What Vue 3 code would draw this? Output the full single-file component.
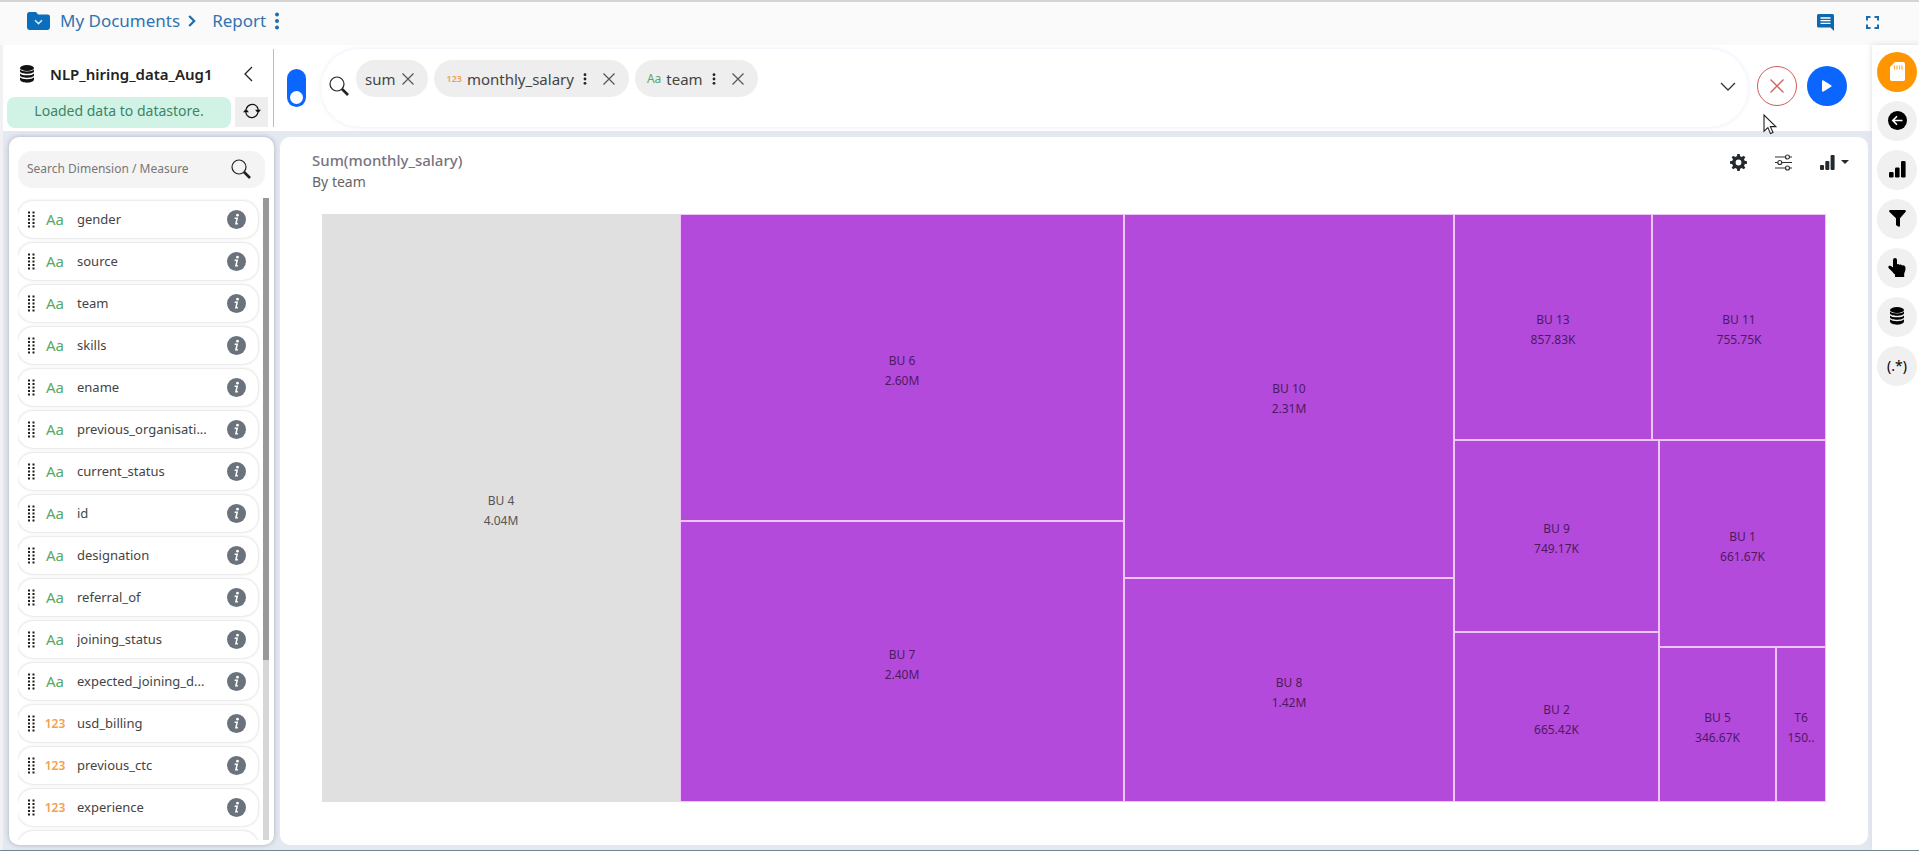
<template>
  <div class="app">
    <header class="topbar">
      <nav class="crumbs" aria-label="Breadcrumb">
        <svg class="folder" width="23" height="18" viewBox="0 0 23 18">
          <path d="M2.5 0h6.5l2.2 2.4h9.3A2.4 2.4 0 0 1 23 4.8v10.8a2.4 2.4 0 0 1-2.4 2.4H2.4A2.4 2.4 0 0 1 0 15.600V2.400A2.4 2.4 0 0 1 2.500 0z" fill="#0a6ebd" />
          <path d="M8 8.200l3.500 3.400L15 8.200" fill="none" stroke="#d5ebfb" stroke-width="1.500" />
        </svg>
        <a href="#">My Documents</a>
        <svg class="crumb-sep" width="8" height="12" viewBox="0 0 8 12">
          <path d="M1.200 1l5 5-5 5" fill="none" stroke="#1b6cb0" stroke-width="2.200" />
        </svg>
        <a href="#">Report</a>
        <button class="plain" aria-label="Report menu">
          <svg width="6" height="18" viewBox="0 0 6 18" fill="#1b6cb0">
            <circle cx="3" cy="2.500" r="2" /><circle cx="3" cy="9" r="2" /><circle cx="3" cy="15.500" r="2" />
          </svg>
        </button>
      </nav>
      <div class="top-actions">
        <button class="plain" aria-label="Comments">
          <svg width="17" height="17" viewBox="0 0 17 17">
            <path d="M1.500 0h14A1.500 1.500 0 0 1 17 1.500V17l-3.500-3.500h-12A1.500 1.500 0 0 1 0 12V1.500A1.500 1.500 0 0 1 1.500 0z" fill="#0c69ae" />
            <path d="M3.500 4h10M3.500 6.700h10M3.500 9.400h10" stroke="#fff" stroke-width="1.300" />
          </svg>
        </button>
        <button class="plain" aria-label="Full screen">
          <svg width="13" height="13" viewBox="0 0 13 13" fill="none" stroke="#1b6cb0" stroke-width="2">
            <path d="M1 4.500V1h3.500M8.500 1H12v3.500M12 8.500V12H8.500M4.500 12H1V8.500" />
          </svg>
        </button>
      </div>
    </header>

    <div class="body">
      <div class="workspace">
        <div class="query-row">
          <section class="source">
            <div class="source-head">
              <svg width="14" height="18" viewBox="0 0 14 18">
                <g fill="#111">
                  <ellipse cx="7" cy="3" rx="7" ry="3" />
                  <path d="M0 4.600c1.500 2.600 12.500 2.600 14 0v2c-1 3-13 3-14 0z" />
                  <path d="M0 8.400c1.500 2.600 12.500 2.600 14 0v2c-1 3-13 3-14 0z" />
                  <path d="M0 12.200c1.500 2.600 12.500 2.600 14 0v2.400c-1 4.200-13 4.200-14 0z" />
                </g>
              </svg>
              <h1>NLP_hiring_data_Aug1</h1>
              <button class="plain" aria-label="Collapse panel">
                <svg width="9" height="16" viewBox="0 0 9 16" fill="none" stroke="#222" stroke-width="1.300">
                  <path d="M8 1L1 8l7 7" />
                </svg>
              </button>
            </div>
            <div class="source-status">
              <p role="status">Loaded data to datastore.</p>
              <button class="refresh" aria-label="Refresh">
                <svg width="18" height="16" viewBox="0 0 18 16">
                  <path d="M3.200 6.200a6.200 6.200 0 0 1 10.600-2.700M14.800 9.800a6.200 6.200 0 0 1-10.600 2.700" fill="none" stroke="#111" stroke-width="1.200" />
                  <path d="M13.800 3.500a6 6 0 0 1 1.400 3.500M4.200 12.500A6 6 0 0 1 2.800 9" fill="none" stroke="#111" stroke-width="1.200" />
                  <path d="M0 9.200L3 5.800l3 3.400zM12 6.800h6l-3 3.400z" fill="#111" />
                </svg>
              </button>
            </div>
          </section>

          <label class="switch">
            <input v-model="nlpMode" type="checkbox" aria-label="Search mode" />
            <span></span>
          </label>

          <div class="query">
            <svg class="lens" width="20" height="20" viewBox="0 0 20 20" fill="none" stroke="#222">
              <circle cx="8" cy="8" r="7" stroke-width="1.200" />
              <path d="M13 13l6 6" stroke-width="2.600" />
            </svg>
            <ul class="chips">
              <li v-for="chip in chips" :key="chip.label" class="chip">
                <span v-if="chip.type" :class="['chip-type', chip.type]">{{ typeLabel[chip.type] }}</span>
                <span>{{ chip.label }}</span>
                <button v-if="chip.type" class="plain chip-menu" :aria-label="chip.label + ' options'">
                  <svg width="4" height="12" viewBox="0 0 4 12" fill="#222">
                    <circle cx="2" cy="1.700" r="1.400" /><circle cx="2" cy="6" r="1.400" /><circle cx="2" cy="10.300" r="1.400" />
                  </svg>
                </button>
                <button class="plain" :aria-label="'Remove ' + chip.label">
                  <svg width="12" height="12" viewBox="0 0 12 12" stroke="#555" stroke-width="1.200">
                    <path d="M.5 .5l11 11M11.500 .5l-11 11" />
                  </svg>
                </button>
              </li>
            </ul>
            <button class="plain expand" aria-label="Expand query">
              <svg width="16" height="9" viewBox="0 0 16 9" fill="none" stroke="#333" stroke-width="1.300">
                <path d="M1 1l7 7 7-7" />
              </svg>
            </button>
          </div>

          <button class="round clear" aria-label="Clear">
            <svg width="14" height="14" viewBox="0 0 14 14" stroke="#d0605f" stroke-width="1.300">
              <path d="M.5 .5l13 13M13.500 .5l-13 13" />
            </svg>
          </button>
          <button class="round run" aria-label="Run">
            <svg width="10" height="12" viewBox="0 0 10 12" fill="#fff">
              <path d="M1.500 .6l7.600 4.600a1 1 0 0 1 0 1.600L1.500 11.400A1 1 0 0 1 0 10.600V1.400A1 1 0 0 1 1.500 .6z" />
            </svg>
          </button>
        </div>

        <div class="panels">
          <aside class="fields">
            <div class="field-search">
              <input type="text" placeholder="Search Dimension / Measure" aria-label="Search Dimension / Measure" />
              <svg width="20" height="20" viewBox="0 0 20 20" fill="none" stroke="#222">
                <circle cx="8" cy="8" r="7" stroke-width="1.200" />
                <path d="M13 13l6 6" stroke-width="2.600" />
              </svg>
            </div>
            <div class="field-scroll">
              <ul class="field-list">
                <li v-for="field in fields" :key="field.name" class="field">
                  <svg class="grip" width="7" height="17" viewBox="0 0 7 17" fill="#1c1c1c">
                    <template v-for="row in 5" :key="row">
                      <rect x="0" :y="row * 3.500 - 3" width="2" height="2" />
                      <rect x="4.500" :y="row * 3.500 - 3" width="2" height="2" />
                    </template>
                  </svg>
                  <span :class="['field-type', field.type]">{{ typeLabel[field.type] }}</span>
                  <span class="field-name">{{ field.name }}</span>
                  <button class="plain" :aria-label="'About ' + field.name">
                    <svg width="19" height="19" viewBox="0 0 19 19">
                      <circle cx="9.500" cy="9.500" r="9.500" fill="#6a737c" />
                      <circle cx="10.500" cy="5.200" r="1.400" fill="#fff" />
                      <path d="M7.600 8.200h2.600l-1.300 5.600h2" fill="none" stroke="#fff" stroke-width="1.500" />
                    </svg>
                  </button>
                </li>
              </ul>
              <div class="track"><div class="thumb"></div></div>
            </div>
          </aside>

          <main class="report">
            <div class="report-head">
              <div>
                <h2>Sum(monthly_salary)</h2>
                <p>By team</p>
              </div>
              <div class="report-tools">
                <button class="plain" aria-label="Settings">
                  <svg width="17" height="17" viewBox="0 0 17 17">
                    <circle cx="8.500" cy="8.500" r="4.700" fill="none" stroke="#222a30" stroke-width="3.600" />
                    <path
                      v-for="i in 8"
                      :key="i"
                      d="M6.800 3L7.300 0h2.400l.5 3z"
                      fill="#222a30"
                      :transform="`rotate(${i * 45} 8.500 8.500)`"
                    />
                  </svg>
                </button>
                <button class="plain" aria-label="Adjust">
                  <svg width="17" height="17" viewBox="0 0 17 17" fill="#fff" stroke="#333" stroke-width="1.200">
                    <path d="M0 3h17M0 8.500h17M0 14h17" />
                    <circle cx="12.500" cy="3" r="2" /><circle cx="4.800" cy="8.500" r="2" /><circle cx="12.500" cy="14" r="2" />
                  </svg>
                </button>
                <button class="plain chart-type" aria-label="Chart type">
                  <svg width="15" height="15" viewBox="0 0 15 15" fill="#222a30">
                    <rect x="0" y="10" width="4" height="5" rx="1" />
                    <rect x="5.300" y="6" width="4" height="9" rx="1" />
                    <rect x="10.600" y="0" width="4" height="15" rx="1" />
                  </svg>
                  <svg width="8" height="4" viewBox="0 0 8 4" fill="#222a30"><path d="M0 0h8L4 4z" /></svg>
                </button>
              </div>
            </div>

            <div class="treemap">
              <div
                v-for="cell in cells"
                :key="cell.name"
                :class="['cell', { muted: cell.muted }]"
                :style="{ gridArea: cell.area }"
              >
                <span>{{ cell.name }}</span>
                <span>{{ cell.value }}</span>
              </div>
            </div>
          </main>
        </div>
      </div>

      <aside class="rail">
        <button class="round rail-btn save" aria-label="Storage">
          <svg width="15" height="19" viewBox="0 0 15 19">
            <path d="M5 0h8.200A1.800 1.800 0 0 1 15 1.800v15.400a1.800 1.800 0 0 1-1.800 1.800H1.800A1.800 1.800 0 0 1 0 17.200V5z" fill="#fff" />
            <path d="M4.500 3.500v4M7 3.500v4M9.500 3.500v4M12 3.500v4" stroke="#ffad3b" stroke-width="1.200" />
          </svg>
        </button>
        <button class="round rail-btn" aria-label="Back">
          <svg width="19" height="19" viewBox="0 0 19 19">
            <circle cx="9.500" cy="9.500" r="9.500" fill="#000" />
            <path d="M14.500 9.500H5M9 5.300L4.800 9.500 9 13.700" fill="none" stroke="#fff" stroke-width="1.600" />
          </svg>
        </button>
        <button class="round rail-btn" aria-label="Charts">
          <svg width="17" height="17" viewBox="0 0 17 17">
            <rect x="0" y="11" width="4.600" height="5.500" rx="1.200" />
            <rect x="6" y="6.500" width="4.600" height="10" rx="1.200" />
            <rect x="12" y="0" width="4.600" height="16.500" rx="1.200" />
          </svg>
        </button>
        <button class="round rail-btn" aria-label="Filters">
          <svg width="17" height="17" viewBox="0 0 17 17">
            <path d="M1.300 0h14.400c1 0 1.500 1.200.8 2L11 8.200v7.300c0 1-.9 1.600-1.700 1.100l-1.800-1.100a1.200 1.200 0 0 1-.5-1V8.200L.5 2C-.2 1.200.3 0 1.300 0z" />
          </svg>
        </button>
        <button class="round rail-btn" aria-label="Interactions">
          <svg width="18" height="19" viewBox="0 0 18 19">
            <path d="M5 2a2 2 0 0 1 4 0v4.500c1-.7 2-.4 2.500.4 1-.6 2-.3 2.500.6 1.800-.5 3.500.3 3.500 2.500 0 3-.8 4-1.300 5.500V19H7v-2.500c-1.500-1.200-3.500-4-5.800-5.800C-1 9 1 6.800 3 8l2 1.500z" />
          </svg>
        </button>
        <button class="round rail-btn" aria-label="Data">
          <svg width="14" height="18" viewBox="0 0 14 18">
            <ellipse cx="7" cy="3" rx="7" ry="3" />
            <path d="M0 4.600c1.500 2.600 12.500 2.600 14 0v2c-1 3-13 3-14 0z" />
            <path d="M0 8.400c1.500 2.600 12.500 2.600 14 0v2c-1 3-13 3-14 0z" />
            <path d="M0 12.200c1.500 2.600 12.500 2.600 14 0v2.400c-1 4.200-13 4.200-14 0z" />
          </svg>
        </button>
        <button class="round rail-btn regex">(.*)</button>
      </aside>
    </div>

    <svg class="pointer" width="14" height="21" viewBox="0 0 14 21">
      <path d="M1 1v16.200l3.900-3.600 2.600 6 2.500-1.100-2.600-5.900h5.400z" fill="#fff" stroke="#222" stroke-width="1.100" />
    </svg>
  </div>
</template>

<script setup>
import { ref } from 'vue'

const nlpMode = ref(true)

const typeLabel = { text: 'Aa', num: '123' }

const chips = [
  { label: 'sum' },
  { label: 'monthly_salary', type: 'num' },
  { label: 'team', type: 'text' },
]

const fields = [
  { name: 'gender', type: 'text' },
  { name: 'source', type: 'text' },
  { name: 'team', type: 'text' },
  { name: 'skills', type: 'text' },
  { name: 'ename', type: 'text' },
  { name: 'previous_organisati...', type: 'text' },
  { name: 'current_status', type: 'text' },
  { name: 'id', type: 'text' },
  { name: 'designation', type: 'text' },
  { name: 'referral_of', type: 'text' },
  { name: 'joining_status', type: 'text' },
  { name: 'expected_joining_d...', type: 'text' },
  { name: 'usd_billing', type: 'num' },
  { name: 'previous_ctc', type: 'num' },
  { name: 'experience', type: 'num' },
  { name: '' },
]

// area: row start / column start / row end / column end
const cells = [
  { name: 'BU 4', value: '4.04M', area: '1 / 1 / 7 / 2', muted: true },
  { name: 'BU 6', value: '2.60M', area: '1 / 2 / 3 / 3' },
  { name: 'BU 7', value: '2.40M', area: '3 / 2 / 7 / 3' },
  { name: 'BU 10', value: '2.31M', area: '1 / 3 / 4 / 4' },
  { name: 'BU 8', value: '1.42M', area: '4 / 3 / 7 / 4' },
  { name: 'BU 13', value: '857.83K', area: '1 / 4 / 2 / 5' },
  { name: 'BU 11', value: '755.75K', area: '1 / 5 / 2 / 8' },
  { name: 'BU 9', value: '749.17K', area: '2 / 4 / 5 / 6' },
  { name: 'BU 2', value: '665.42K', area: '5 / 4 / 7 / 6' },
  { name: 'BU 1', value: '661.67K', area: '2 / 6 / 6 / 8' },
  { name: 'BU 5', value: '346.67K', area: '6 / 6 / 7 / 7' },
  { name: 'T6', value: '150..', area: '6 / 7 / 7 / 8' },
]
</script>

<style>
body {
  margin: 0;
  background: #fff;
}
</style>

<style scoped>
.app {
  display: flex;
  flex-direction: column;
  height: 100vh;
  box-sizing: border-box;
  border-bottom: 1px solid #70868b;
  overflow: hidden;
  font-family: "Noto Sans", "Open Sans", sans-serif;
  font-size: 14px;
  color: #444;
}
.app * { box-sizing: border-box; }
h1, h2, p, ul { margin: 0; padding: 0; }
ul { list-style: none; }
svg { display: block; flex: none; }
button { font-family: inherit; cursor: pointer; }
.plain {
  display: flex;
  align-items: center;
  padding: 0;
  border: none;
  background: none;
}
.round {
  display: flex;
  align-items: center;
  justify-content: center;
  flex: none;
  width: 40px;
  height: 40px;
  padding: 0;
  border: none;
  border-radius: 50%;
}

/* ── Top bar ── */
.topbar {
  display: flex;
  align-items: center;
  justify-content: space-between;
  flex: none;
  height: 45px;
  padding: 0 40px 6px 27px;
  border-top: 2px solid #d4d4d4;
  background: #fafafa;
}
.crumbs { display: flex; align-items: center; }
.crumbs a {
  color: #3173b3;
  font-size: 17px;
  line-height: 24px;
  text-decoration: none;
}
.folder { margin-right: 10px; }
.crumb-sep { margin: 0 16px 0 8px; }
.crumbs .plain { margin-left: 8px; }
.top-actions {
  display: flex;
  align-items: center;
  gap: 32px;
  padding-top: 4px;
}

/* ── Shell ── */
.body { display: flex; flex: 1; min-height: 0; }
.workspace {
  display: flex;
  flex: 1;
  flex-direction: column;
  min-width: 0;
  border-left: 3px solid #f1f1f4;
}

/* ── Query row ── */
.query-row {
  display: flex;
  align-items: center;
  flex: none;
  height: 86px;
  padding-right: 25px;
}
.source {
  width: 271px;
  height: 78px;
  padding: 0 5px 0 4px;
  border-right: 1px solid #bbb;
}
.source-head {
  display: flex;
  align-items: center;
  height: 48px;
  padding: 2px 15px 0 13px;
}
.source-head h1 {
  flex: 1;
  margin-left: 16px;
  color: #222;
  font-size: 15px;
  font-weight: 600;
  line-height: 24px;
}
.source-status { display: flex; gap: 4px; }
.source-status p {
  flex: 1;
  height: 31px;
  border-radius: 8px;
  background: #d1f3e6;
  color: #3d8468;
  font-size: 14px;
  line-height: 28px;
  text-align: center;
}
.refresh {
  display: flex;
  align-items: center;
  justify-content: center;
  width: 33px;
  height: 30px;
  padding: 0 0 2px;
  border: none;
  background: #eee;
}
.switch { margin: 0 15px 0 13px; cursor: pointer; }
.switch input {
  position: absolute;
  opacity: 0;
}
.switch span {
  display: flex;
  align-items: flex-end;
  width: 19px;
  height: 38px;
  padding: 3px;
  border-radius: 10px;
  background: #0a66ff;
}
.switch span::after {
  content: "";
  width: 13px;
  height: 13px;
  border-radius: 50%;
  background: #fff;
}
.switch input:not(:checked) + span { align-items: flex-start; background: #aaa; }
.query {
  display: flex;
  align-items: center;
  flex: 1;
  height: 78px;
  margin-right: 9px;
  padding: 0 12px 4px 8px;
  border-radius: 39px;
  box-shadow: 0 0 5px #e8e9f8;
}
.chips {
  display: flex;
  align-self: flex-start;
  flex: 1;
  gap: 6px;
  margin: 11px 0 0 7px;
}
.chip {
  display: flex;
  align-items: center;
  height: 37px;
  padding: 0 14px 0 9px;
  border-radius: 19px;
  background: #eee;
  color: #444;
  font-size: 15px;
}
.chip .plain:last-child { margin-left: 7px; }
.chip-type { margin: 0 5px 0 3px; }
.chip-type.num { font-size: 9px; font-weight: 600; }
.chip-type.text { font-size: 12px; }
.chip-menu { margin: 0 9px; }
.num { color: #f3a04d; }
.text { color: #58a866; }
.clear, .run { margin-bottom: 4px; }
.clear { border: 1px solid #cf5b5b; background: #fff; }
.run { margin-left: 10px; background: #0a66ff; }

/* ── Panels ── */
.panels {
  display: flex;
  flex: 1;
  gap: 6px;
  min-height: 0;
  padding: 6px 4px 5px 6px;
  background: #e4e8f0;
}
.fields {
  display: flex;
  flex-direction: column;
  width: 265px;
  padding: 14px 5px 5px 9px;
  border-radius: 10px;
  background: #fff;
  box-shadow: 0 0 5px #a9afba;
}
.field-search {
  display: flex;
  align-items: center;
  flex: none;
  height: 37px;
  margin-right: 4px;
  padding: 0 14px 2px 9px;
  border-radius: 14px;
  background: #f4f4f4;
}
.field-search input {
  flex: 1;
  min-width: 0;
  padding: 0;
  border: none;
  outline: none;
  background: none;
  font-family: inherit;
  font-size: 12px;
}
.field-search input::placeholder { color: #777; }
.field-scroll {
  display: flex;
  flex: 1;
  justify-content: space-between;
  min-height: 0;
  margin-top: 10px;
  overflow: hidden;
}
.field-list {
  display: flex;
  flex-direction: column;
  gap: 5px;
  width: 243px;
  margin-left: -3px;
  padding: 3px 0 0 3px;
}
.field {
  display: flex;
  align-items: center;
  flex: none;
  height: 37px;
  padding: 0 12px 1px 10px;
  border-radius: 15px;
  background: #fff;
  box-shadow: 0 0 3px #c9c9c9;
}
.field-type {
  width: 34px;
  margin-left: 3px;
  font-size: 15px;
  text-align: center;
}
.field-type.num { font-size: 12px; font-weight: 600; }
.field-name {
  flex: 1;
  margin-left: 5px;
  overflow: hidden;
  color: #444;
  font-size: 13px;
  line-height: 20px;
  white-space: nowrap;
}
.track {
  flex: none;
  width: 6px;
  background: #d6d6d6;
}
.thumb { height: 72%; background: #989898; }

/* ── Report ── */
.report {
  display: flex;
  flex: 1;
  flex-direction: column;
  min-width: 0;
  padding: 12px 42px 43px;
  border-radius: 10px;
  background: #fff;
}
.report-head {
  display: flex;
  justify-content: space-between;
  margin: 0 -23px 0 -10px;
}
.report-head h2 {
  color: #777380;
  font-size: 15px;
  font-weight: 500;
  line-height: 22px;
}
.report-head p { color: #666; font-size: 14px; line-height: 22px; }
.report-tools {
  display: flex;
  align-items: center;
  gap: 28px;
  height: 26px;
}
.chart-type { gap: 6px; }
.treemap {
  display: grid;
  flex: 1;
  grid-template-columns:
    minmax(0, 358fr) minmax(0, 444fr) minmax(0, 330fr) minmax(0, 198fr)
    minmax(0, 7fr) minmax(0, 117fr) minmax(0, 50fr);
  grid-template-rows:
    minmax(0, 226fr) minmax(0, 81fr) minmax(0, 57fr)
    minmax(0, 54fr) minmax(0, 15fr) minmax(0, 155fr);
  margin-top: 21px;
}
.cell {
  display: flex;
  flex-direction: column;
  align-items: center;
  justify-content: center;
  padding-top: 6px;
  border: 1px solid #efc4f7;
  background: #b44adb;
  color: #4d1a62;
  font-size: 12px;
  line-height: 20px;
}
.cell.muted {
  border-color: #e0e0e0;
  background: #e0e0e0;
  color: #555;
}

/* ── Right rail ── */
.rail {
  display: flex;
  flex: none;
  flex-direction: column;
  align-items: center;
  gap: 9px;
  width: 47px;
  padding: 7px 0 0 3px;
  background: #fff;
  box-shadow: 0 0 6px #dcdce4;
}
.rail-btn { padding-bottom: 2px; background: #f0f0f0; color: #000; }
.rail-btn.save { background: #ff9500; }
.regex { font-size: 14px; }

.pointer {
  position: absolute;
  top: 114px;
  left: 1763px;
}
</style>
